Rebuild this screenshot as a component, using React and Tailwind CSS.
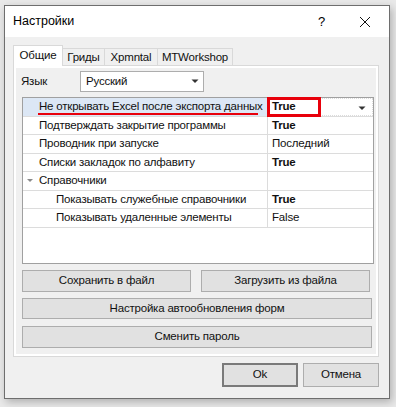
import React from "react";

const ROWS = [
    { label: "Не открывать Excel после экспорта данных", value: "True", bold: true, selected: true },
    { label: "Подтверждать закрытие программы", value: "True", bold: true },
    { label: "Проводник при запуске", value: "Последний" },
    { label: "Списки закладок по алфавиту", value: "True", bold: true },
    { label: "Справочники", category: true },
    { label: "Показывать служебные справочники", value: "True", bold: true, child: true },
    { label: "Показывать удаленные элементы", value: "False", child: true },
];

function Btn({ children, className = "" }) {
    return (
        <div className={"flex items-center justify-center whitespace-nowrap border border-[#adadad] bg-[#e1e1e1] text-[#111] " + className}>
            {children}
        </div>
    );
}

function Row({ r }) {
    if (r.category) {
        return (
            <div className="flex h-[18.5px] border-b border-[#dcdcdc]">
                <div className="flex w-[244px] items-center">
                    <svg width="16" height="10" viewBox="0 0 16 10" className="ml-[1px]">
                        <path d="M3 3 L9 3 L6 6 Z" fill="#8a8a8a" />
                    </svg>
                    <span className="ml-[-1px] whitespace-nowrap">{r.label}</span>
                </div>
                <div className="flex-1 border-l border-[#dcdcdc]" />
            </div>
        );
    }
    return (
        <div className="flex h-[18.5px] border-b border-[#dcdcdc]">
            <div className={"relative flex w-[244px] items-center " + (r.selected ? "bg-[#dce7f5]" : "")}>
                <span className={"whitespace-nowrap " + (r.child ? "pl-[33px]" : "pl-[16px]")}>{r.label}</span>
                {r.selected && <div className="absolute left-[15px] top-[15px] h-[2px] w-[220px] bg-[#e8000b]" />}
            </div>
            <div className={"relative flex flex-1 items-center border-l border-[#dcdcdc] pl-[4px] " + (r.selected ? "border border-dotted border-[#333]" : "")}>
                <span className={"whitespace-nowrap " + (r.bold ? "font-bold" : "")}>{r.value}</span>
                {r.selected && (
                    <>
                        <div className="absolute left-[-1px] top-[-2px] h-[20px] w-[54px] border-[3px] border-[#e8000b]" />
                        <svg width="8" height="5" viewBox="0 0 8 5" className="absolute right-[6px] top-[7px]">
                            <path d="M0.5 0.5 L7.5 0.5 L4 4 Z" fill="#333" />
                        </svg>
                    </>
                )}
            </div>
        </div>
    );
}

export default function App() {
    return (
        <div className="h-[407px] w-[396px] bg-[#e9e9e9] pl-[4px] pt-[5px] text-[11.5px] tracking-[-0.2px] text-[#111]" style={{ fontFamily: '"Liberation Sans", Arial, sans-serif' }}>
            <div className="flex h-[394px] w-[386px] flex-col border border-[#6e6e6e] bg-[#f0f0f0] shadow-[2px_3px_8px_rgba(0,0,0,0.25)]">
                {/* title bar */}
                <div className="flex h-[31px] items-center bg-white">
                    <span className="ml-[8px] text-[12.5px] tracking-normal text-black">Настройки</span>
                    <span className="ml-auto mr-[34px] text-[13px] text-black">?</span>
                    <svg width="12" height="12" viewBox="0 0 12 12" className="mr-[18px]">
                        <path d="M1 1 L11 11 M11 1 L1 11" stroke="#111" strokeWidth="1" />
                    </svg>
                </div>

                {/* tabs */}
                <div className="ml-[8px] mt-[8px] flex h-[21px] items-end">
                    <div className="relative z-10 flex h-[21px] w-[50px] items-center justify-center border border-b-0 border-[#d9d9d9] bg-white pb-[1px]">Общие</div>
                    <div className="flex h-[18px] w-[42px] items-center justify-center border border-b-0 border-l-0 border-[#d9d9d9] bg-[#f0f0f0]">Гриды</div>
                    <div className="flex h-[18px] w-[53px] items-center justify-center border border-b-0 border-l-0 border-[#d9d9d9] bg-[#f0f0f0]">Xpmntal</div>
                    <div className="flex h-[18px] w-[75px] items-center justify-center border border-b-0 border-l-0 border-[#d9d9d9] bg-[#f0f0f0]">MTWorkshop</div>
                </div>

                {/* tab page */}
                <div className="ml-[8px] mt-[-1px] h-[292px] w-[366px] border border-[#d9d9d9] bg-white p-[2px]">
                    <div className="h-full bg-[#f0f0f0] px-[6px] pt-[2px]">
                        <div className="flex h-[23px] items-center">
                            <span className="ml-[-1px] w-[59px]">Язык</span>
                            <div className="flex h-[21px] w-[124px] items-center border border-[#adadad] bg-white pl-[5px]">
                                <span>Русский</span>
                                <svg width="8" height="5" viewBox="0 0 8 5" className="ml-auto mr-[4px]">
                                    <path d="M0.5 0.5 L7.5 0.5 L4 4 Z" fill="#333" />
                                </svg>
                            </div>
                        </div>

                        {/* property grid */}
                        <div className="mt-[4px] h-[167px] w-[352px] border border-[#a0a0a0] bg-white text-[#111]">
                            {ROWS.map((r, i) => (
                                <Row key={i} r={r} />
                            ))}
                        </div>

                        <div className="mt-[6px] flex gap-[10px]">
                            <Btn className="h-[22px] w-[170px]">Сохранить в файл</Btn>
                            <Btn className="h-[22px] w-[170px]">Загрузить из файла</Btn>
                        </div>
                        <Btn className="mt-[6px] h-[21px] w-[350px]">Настройка автообновления форм</Btn>
                        <Btn className="mt-[7px] h-[22px] w-[350px]">Сменить пароль</Btn>
                    </div>
                </div>

                {/* dialog buttons */}
                <div className="mt-[6px] flex justify-end gap-[5px] pr-[10px]">
                    <div className="flex h-[24px] w-[76px] items-center justify-center border-2 border-[#7a7a7a] bg-[#e1e1e1]">Ok</div>
                    <div className="flex h-[24px] w-[76px] items-center justify-center border border-[#adadad] bg-[#e1e1e1]">Отмена</div>
                </div>
            </div>
        </div>
    );
}
